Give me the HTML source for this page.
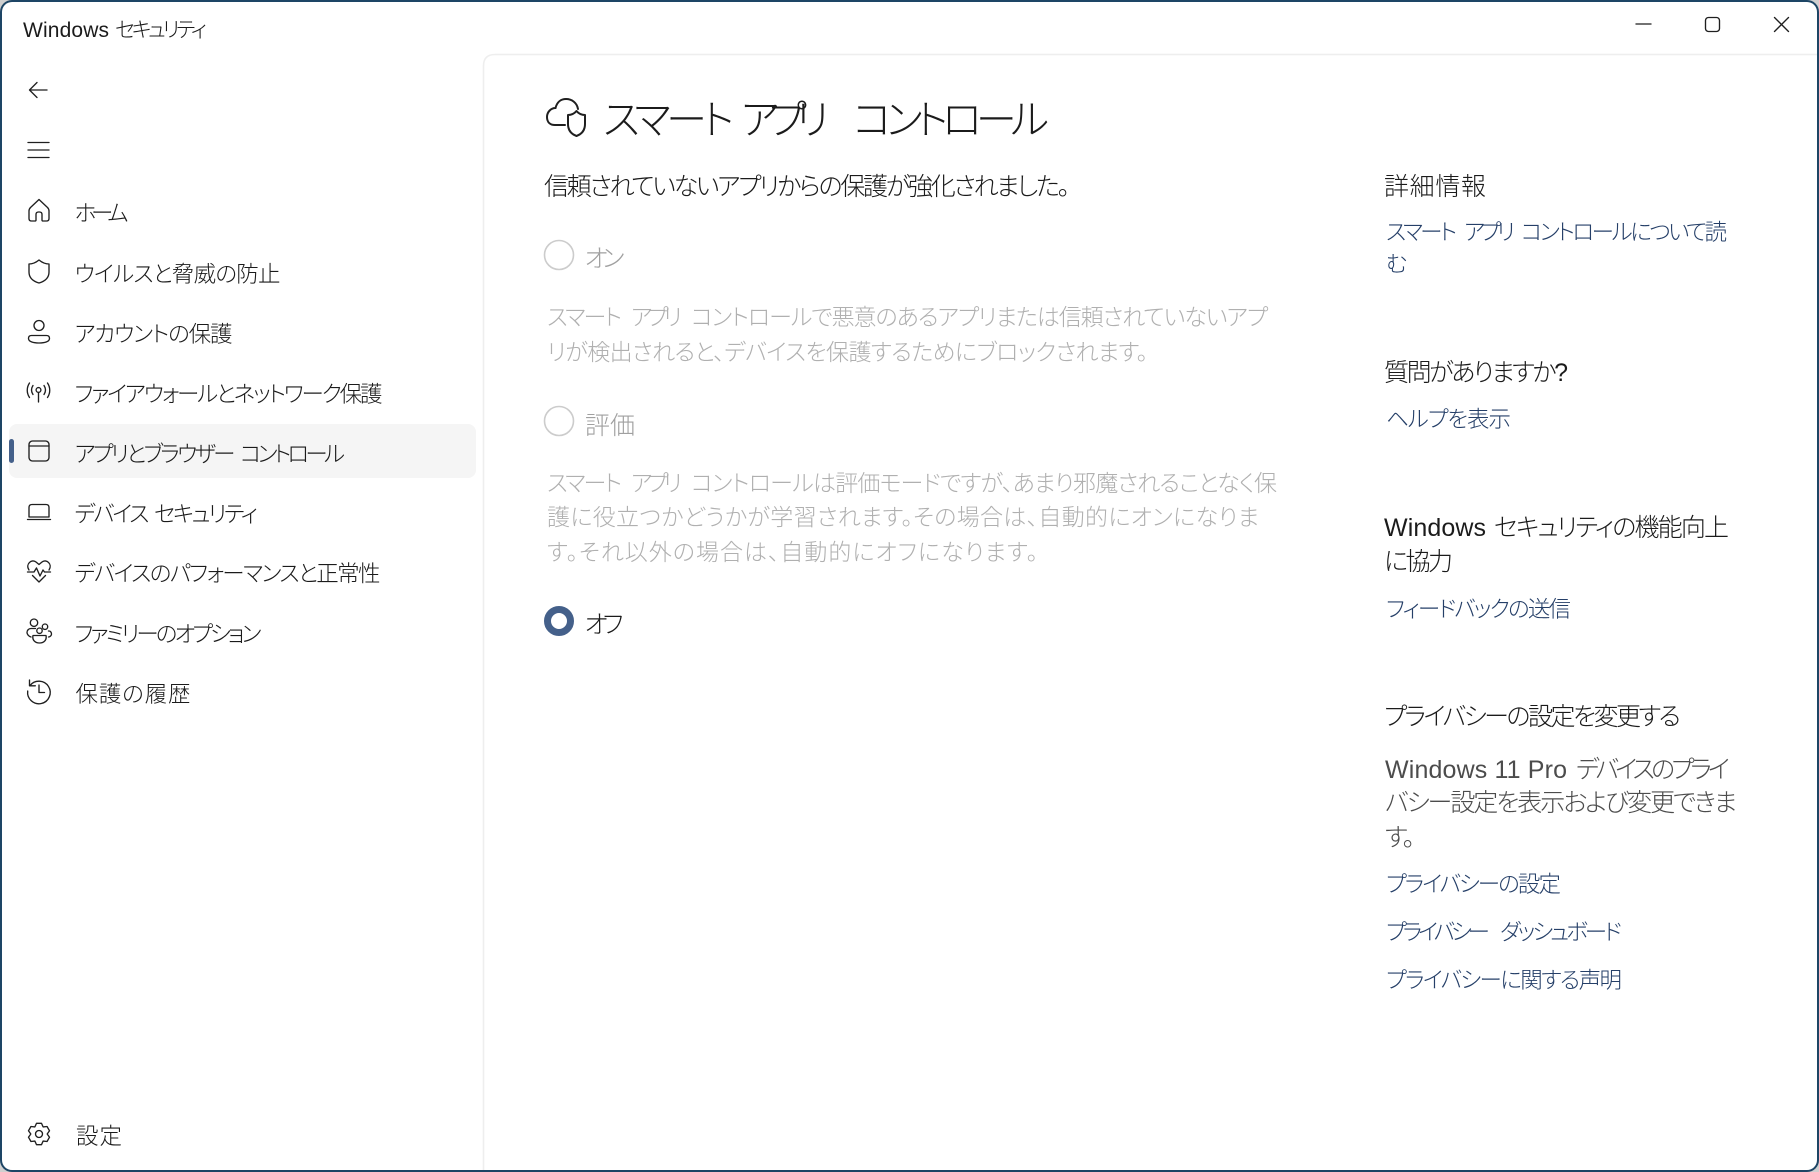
<!DOCTYPE html>
<html lang="ja">
<head>
<meta charset="utf-8">
<title>Windows セキュリティ</title>
<style>
html,body{margin:0;padding:0;width:1819px;height:1172px;overflow:hidden;background:#cfcfcf}
#win{position:absolute;left:0;top:0;width:1819px;height:1172px;background:#1d4565;border-radius:12px}
#in{position:absolute;left:2px;top:2px;width:1815px;height:1168px;background:#fff;border-radius:10px}
svg{position:absolute;left:0;top:0}
text{font-family:"Liberation Sans","Noto Sans CJK JP",sans-serif;font-feature-settings:"palt";font-weight:300;white-space:pre}
.n{font-size:22.5px;fill:#1b1b1b}
.d{font-size:23px;fill:#b0b0b0}
.r{font-size:25px;fill:#a0a0a0}
.l{font-size:22.5px;fill:#253f68}
.h{font-size:25px;fill:#1b1b1b}
.p{font-size:25px;fill:#4c4c4c}
.i{fill:none;stroke:#1f1f1f;stroke-width:1.35;stroke-linecap:round;stroke-linejoin:round}
</style>
</head>
<body>
<div id="win"><div id="in"></div></div>
<svg width="1819" height="1172" viewBox="0 0 1819 1172" xmlns="http://www.w3.org/2000/svg">
<!-- content panel -->
<path d="M483.5 1170 V66 Q483.5 54.5 495 54.5 H1817" fill="#fff" stroke="#eeeeee" stroke-width="1.6"/>
<!-- selected nav -->
<rect x="9" y="424" width="467" height="54" rx="8" fill="#f5f5f5"/>
<rect x="9" y="439" width="5" height="24" rx="2.5" fill="#44608a"/>

<!-- title & caption buttons -->
<text x="23" y="37" font-size="21" fill="#1b1b1b" textLength="86">Windows</text>
<text x="115" y="37" font-size="21" fill="#1b1b1b" textLength="92">セキュリティ</text>
<path class="i" d="M1636 24 H1651"/>
<rect class="i" x="1705.5" y="17.5" width="14" height="14" rx="3"/>
<path class="i" d="M1774.5 17.5 L1788.5 31.5 M1788.5 17.5 L1774.5 31.5"/>

<!-- back, hamburger -->
<path class="i" d="M47 90 H30 M37 82.5 L29.5 90 L37 97.5"/>
<path class="i" d="M28 142.5 H49 M28 150 H49 M28 157.5 H49"/>

<!-- nav icons -->
<path class="i" d="M39 199.5 L30.5 207.5 Q29 209 29 211 V218.5 Q29 221 31.5 221 H35 Q36 221 36 220 V214.5 Q36 212 38.5 212 H39.5 Q42 212 42 214.5 V220 Q42 221 43 221 H46.5 Q49 221 49 218.5 V211 Q49 209 47.5 207.5 Z"/>
<path class="i" d="M39 260 C36 262.5 32.5 264 29 264 V272 C29 277 32 281 39 283 C46 281 49 277 49 272 V264 C45.5 264 42 262.5 39 260Z"/>
<circle class="i" cx="39" cy="325.5" r="5"/>
<path class="i" d="M31.5 335.5 H46.5 Q49.5 335.5 49.5 338.5 C49.5 341.5 45 343 39 343 C33 343 28.5 341.5 28.5 338.5 Q28.5 335.5 31.5 335.5Z"/>
<circle class="i" cx="38.5" cy="390" r="2.4"/>
<path class="i" d="M38.5 392.5 V402 M33 385.5 C31 388.5 31 391.5 33 394.5 M44 385.5 C46 388.5 46 391.5 44 394.5 M29.5 383 C26.5 387.5 26.5 393 29.5 397.5 M47.5 383 C50.5 387.5 50.5 393 47.5 397.5"/>
<rect class="i" x="29" y="441" width="20" height="20" rx="3.5"/>
<path class="i" d="M29 446 H49"/>
<path class="i" d="M29 517 V507.5 Q29 504.5 32 504.5 H46 Q49 504.5 49 507.5 V517 Z M27.5 519.5 H50.5"/>
<path class="i" d="M29 570 C25 564 32 558.5 36 562 L39 564.5 L42 562 C46 558.5 53 564 49 570 M27.5 572 H34 L36.5 568 L40 576 L43 570 L44.5 572 H50.5 M32.5 575.5 L39 582 L45.5 575.5"/>
<circle class="i" cx="34" cy="622.7" r="3.7"/>
<circle class="i" cx="45" cy="626.7" r="2.7"/>
<circle class="i" cx="39.5" cy="630.7" r="2.7"/>
<path class="i" d="M33 635.5 H46 C47 640 44 643 39.5 643 C35 643 32 640 33 635.5Z M35.5 628.5 H31 C28.5 628.5 27 630.5 27 632.5 C27 634.5 29 636.5 31 637 M48.5 631 H49 C50.5 631 51.5 632.5 51.5 634 C51.5 635.5 50 637 48.5 637"/>
<path class="i" d="M30 685.5 A11.3 11.3 0 1 1 27.7 691 M29.5 680 V685.8 H35.3 M39 685 V692.5 H44.5"/>
<g transform="translate(39 1134)"><path class="i" d="M2.47 10.72 L-2.47 10.72 L-4.1 7.1 L-8.04 7.5 L-10.52 3.22 L-8.2 0 L-10.52 -3.22 L-8.04 -7.5 L-4.1 -7.1 L-2.47 -10.72 L2.47 -10.72 L4.1 -7.1 L8.04 -7.5 L10.52 -3.22 L8.2 0 L10.52 3.22 L8.04 7.5 L4.1 7.1 Z"/><circle class="i" r="3.5"/></g>

<!-- nav labels -->
<text class="n" x="74.5" y="221" textLength="54">ホーム</text>
<text class="n" x="74.5" y="282" textLength="206">ウイルスと脅威の防止</text>
<text class="n" x="74.5" y="342" textLength="158">アカウントの保護</text>
<text class="n" x="74.5" y="402" textLength="308">ファイアウォールとネットワーク保護</text>
<text class="n" x="74.5" y="462" textLength="161">アプリとブラウザー</text>
<text class="n" x="240" y="462" textLength="105">コントロール</text>
<text class="n" x="74.5" y="522" textLength="75">デバイス</text>
<text class="n" x="154" y="522" textLength="104">セキュリティ</text>
<text class="n" x="74.5" y="581.5" textLength="306">デバイスのパフォーマンスと正常性</text>
<text class="n" x="74.5" y="642" textLength="187">ファミリーのオプション</text>
<text class="n" x="75.5" y="702" textLength="115">保護の履歴</text>
<text class="n" x="76" y="1144" textLength="46">設定</text>

<!-- heading -->
<path d="M565 125 H555 C550 125 547 122 547 117 C547 112 551 108 555.5 108 C557 102 561 99 566 99 C572 99 577 103 578 109" fill="none" stroke="#1f1f1f" stroke-width="2" stroke-linecap="round"/>
<path d="M576.5 111 C574 114 571 115 568 115 V124 C568 130 571 134 576.5 136 C582 134 585 130 585 124 V115 C582 115 579 114 576.5 111Z" fill="none" stroke="#1f1f1f" stroke-width="2" stroke-linejoin="round"/>
<text x="603" y="134" font-size="41" fill="#1b1b1b" textLength="131">スマート</text>
<text x="741" y="134" font-size="41" fill="#1b1b1b" textLength="88">アプリ</text>
<text x="853" y="134" font-size="41" fill="#1b1b1b" textLength="196">コントロール</text>

<text class="h" x="544" y="195" textLength="526">信頼されていないアプリからの保護が強化されました。</text>

<!-- radios -->
<circle cx="559" cy="255" r="14.5" fill="#fff" stroke="#cccccc" stroke-width="1.6"/>
<text class="r" x="584.5" y="267" textLength="40">オン</text>
<text class="d" x="547" y="325" textLength="75">スマート</text>
<text class="d" x="631" y="325" textLength="51">アプリ</text>
<text class="d" x="691" y="325" textLength="577">コントロールで悪意のあるアプリまたは信頼されていないアプ</text>
<text class="d" x="547" y="360" textLength="601">リが検出されると、デバイスを保護するためにブロックされます。</text>

<circle cx="559" cy="421" r="14.5" fill="#fff" stroke="#cccccc" stroke-width="1.6"/>
<text class="r" x="585" y="434" textLength="50">評価</text>
<text class="d" x="547" y="491" textLength="75">スマート</text>
<text class="d" x="631" y="491" textLength="51">アプリ</text>
<text class="d" x="691" y="491" textLength="586">コントロールは評価モードですが、あまり邪魔されることなく保</text>
<text class="d" x="547" y="525" textLength="712">護に役立つかどうかが学習されます。その場合は、自動的にオンになりま</text>
<text class="d" x="547" y="560" textLength="491">す。それ以外の場合は、自動的にオフになります。</text>

<circle cx="559" cy="621" r="11.5" fill="#fff" stroke="#44608a" stroke-width="7"/>
<text class="r" x="584.5" y="633" style="fill:#1b1b1b" textLength="39">オフ</text>

<!-- right column -->
<text class="h" x="1384" y="195" textLength="102">詳細情報</text>
<text class="l" x="1386" y="240" textLength="71">スマート</text>
<text class="l" x="1464" y="240" textLength="51">アプリ</text>
<text class="l" x="1521" y="240" textLength="206">コントロールについて読</text>
<text class="l" x="1386" y="272" textLength="19">む</text>

<text class="h" x="1384" y="381" textLength="184">質問がありますか?</text>
<text class="l" x="1386" y="427" textLength="125">ヘルプを表示</text>

<text class="h" x="1384" y="536" textLength="102">Windows</text>
<text class="h" x="1494" y="536" textLength="235">セキュリティの機能向上</text>
<text class="h" x="1384" y="570" textLength="69">に協力</text>
<text class="l" x="1386" y="617" textLength="185">フィードバックの送信</text>

<text class="h" x="1384" y="725" textLength="297">プライバシーの設定を変更する</text>
<text class="p" x="1385" y="778" textLength="182">Windows 11 Pro</text>
<text class="p" x="1576" y="778" textLength="154">デバイスのプライ</text>
<text class="p" x="1385" y="811" textLength="352">バシー設定を表示および変更できま</text>
<text class="p" x="1385" y="846" textLength="30">す。</text>
<text class="l" x="1386" y="892" textLength="175">プライバシーの設定</text>
<text class="l" x="1386" y="940" textLength="104">プライバシー</text>
<text class="l" x="1500" y="940" textLength="122">ダッシュボード</text>
<text class="l" x="1386" y="988" textLength="236">プライバシーに関する声明</text>
</svg>
</body>
</html>
